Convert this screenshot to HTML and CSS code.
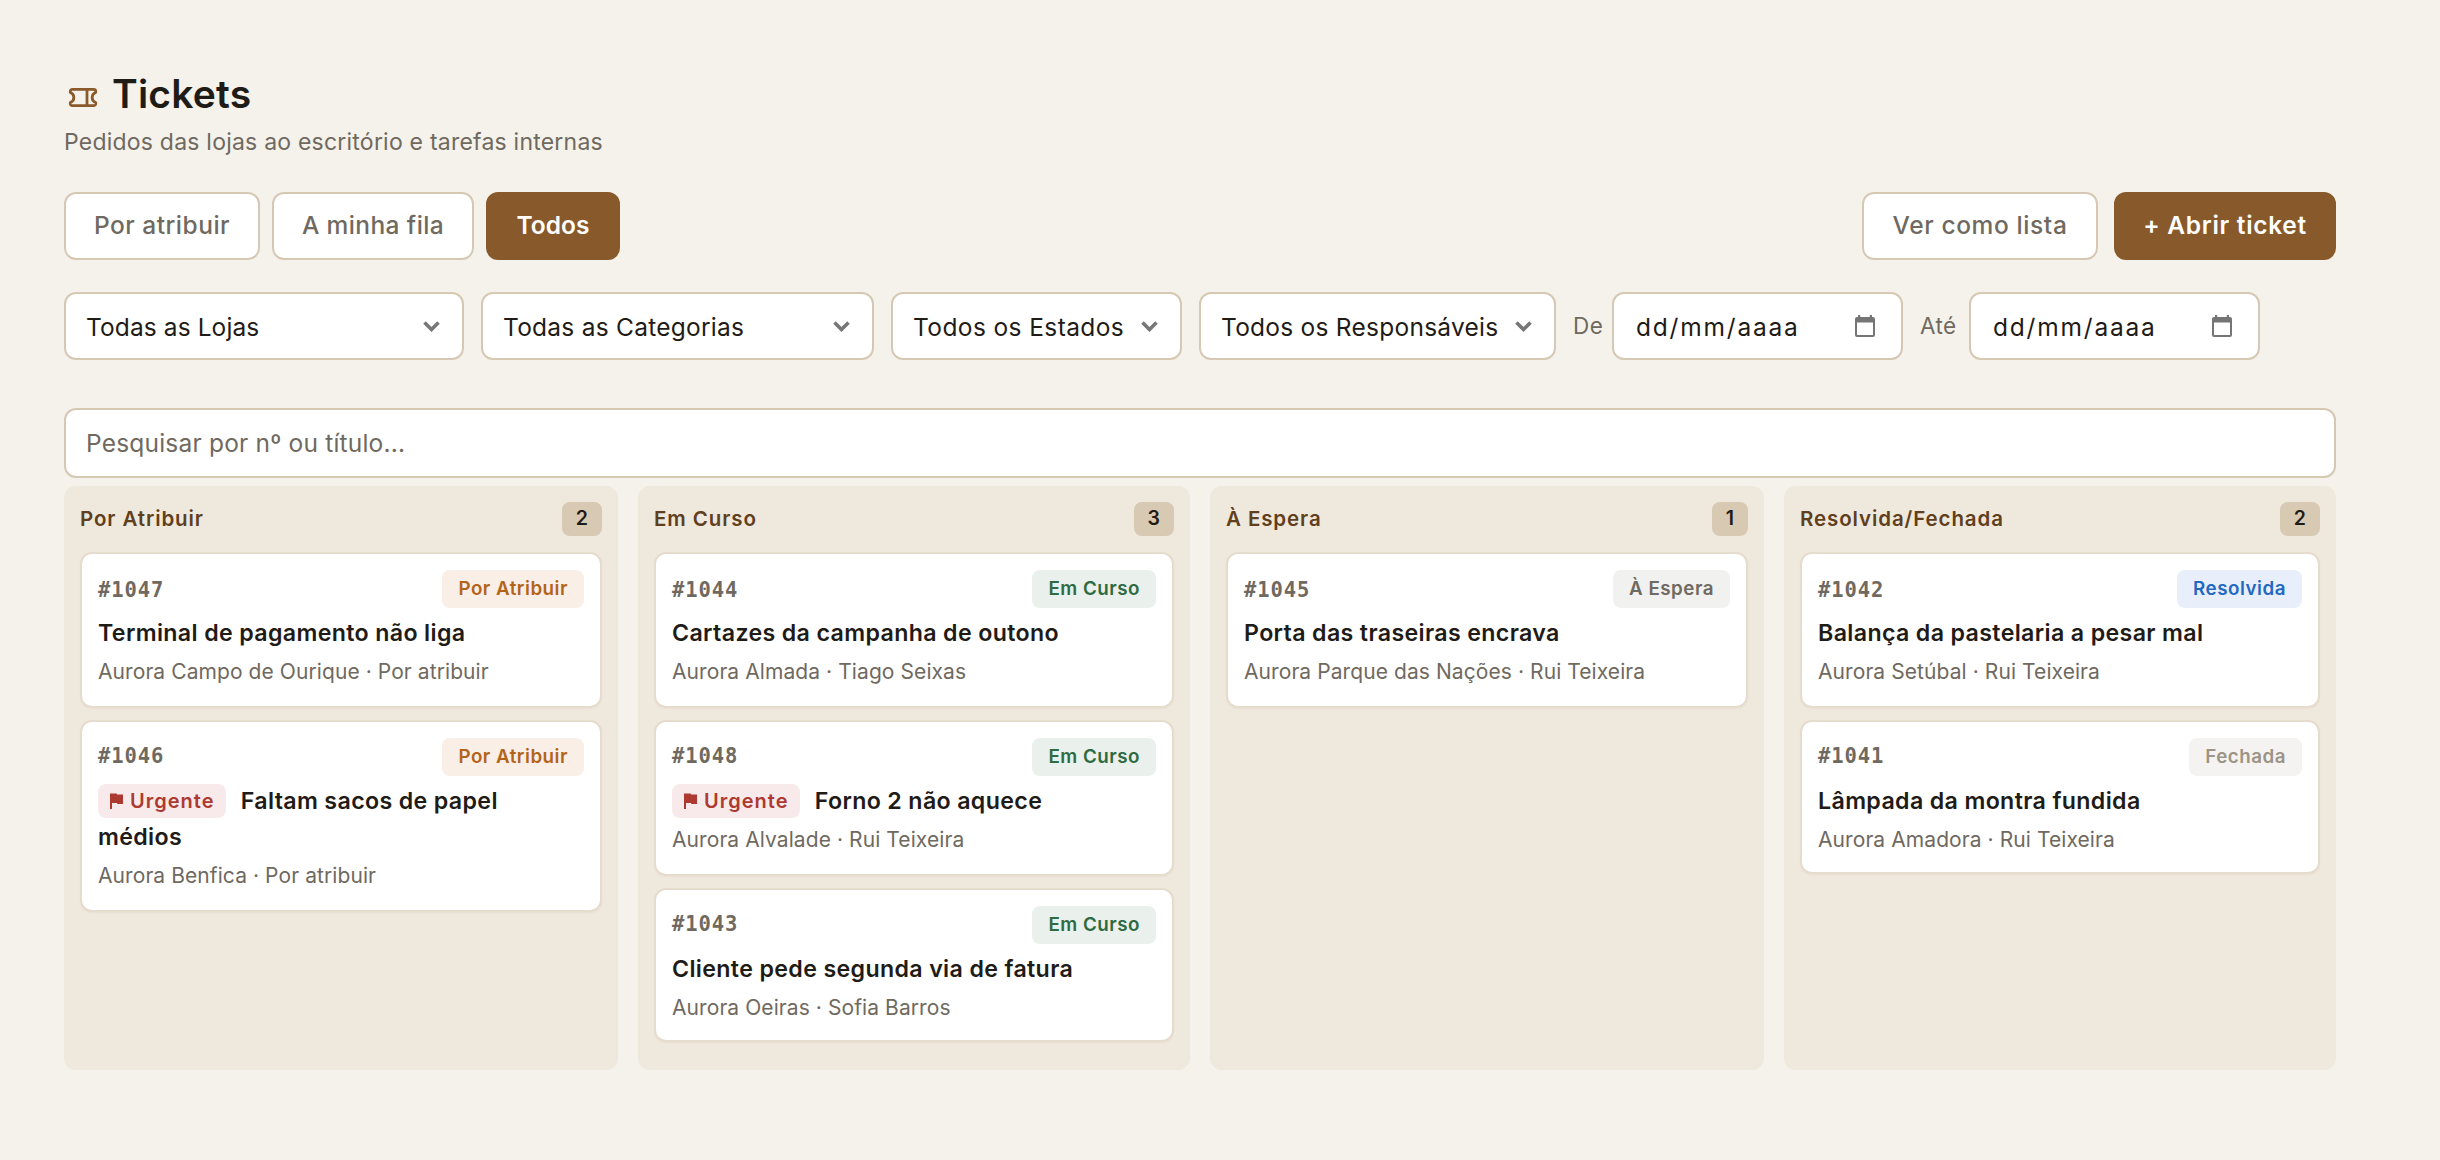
FILE: index.html
```
<!DOCTYPE html>
<html lang="pt">
<head>
    <meta charset="UTF-8">
    <title>Tickets</title>
    <link rel="stylesheet" href="styles.css">
</head>
<body>
    <svg class="sprite" aria-hidden="true">
        <symbol id="chevron" viewBox="0 0 17 11">
            <path d="M1.500 1.500l7 7 7-7" fill="none" stroke="currentColor" stroke-width="3.6"/>
        </symbol>
        <symbol id="calendar" viewBox="0 0 20 22">
            <path d="M3 0h2.2v2h9.6V0H17v2h1a2 2 0 0 1 2 2v16a2 2 0 0 1-2 2H2a2 2 0 0 1-2-2V4a2 2 0 0 1 2-2h1zM2 7.5V20h16V7.5z" fill="currentColor" fill-rule="evenodd"/>
        </symbol>
        <symbol id="flag" viewBox="0 0 13 16">
            <path d="M0 .5h6.6l.5 1H13v9.500H7.500l-.6-1H2V16H0z" fill="currentColor"/>
        </symbol>
    </svg>

    <main class="page">
        <h1 class="page-title">
            <svg class="ticket-icon" viewBox="0 0 28 19">
                <path d="M3.300 1.300h21.400a2 2 0 0 1 2 2v1.200a5.300 5.300 0 0 0 0 10v1.200a2 2 0 0 1-2 2H3.300a2 2 0 0 1-2-2v-1.200a5.300 5.300 0 0 0 0-10V3.300a2 2 0 0 1 2-2zM18 1.300v16.400"/>
            </svg>
            Tickets
        </h1>
        <p class="subtitle">Pedidos das lojas ao escritório e tarefas internas</p>

        <div class="toolbar">
            <button class="btn btn-unassigned">Por atribuir</button>
            <button class="btn btn-mine">A minha fila</button>
            <button class="btn btn-all primary">Todos</button>
            <button class="btn btn-view">Ver como lista</button>
            <button class="btn btn-new primary">+ Abrir ticket</button>
        </div>

        <div class="filters">
            <div class="field store">Todas as Lojas <svg class="chevron"><use href="#chevron"/></svg></div>
            <div class="field category">Todas as Categorias <svg class="chevron"><use href="#chevron"/></svg></div>
            <div class="field state">Todos os Estados <svg class="chevron"><use href="#chevron"/></svg></div>
            <div class="field owner">Todos os Responsáveis <svg class="chevron"><use href="#chevron"/></svg></div>
            <div class="date-group from">
                <span class="date-label">De</span>
                <div class="field date">dd/mm/aaaa <svg class="calendar"><use href="#calendar"/></svg></div>
            </div>
            <div class="date-group to">
                <span class="date-label">Até</span>
                <div class="field date">dd/mm/aaaa <svg class="calendar"><use href="#calendar"/></svg></div>
            </div>
        </div>

        <input class="search" type="text" placeholder="Pesquisar por nº ou título...">

        <div class="board">
            <section class="column">
                <header class="column-head"><h2>Por Atribuir</h2><span class="count">2</span></header>
                <article class="card">
                    <div class="card-head"><span class="ticket-id">#1047</span><span class="status unassigned">Por Atribuir</span></div>
                    <h3>Terminal de pagamento não liga</h3>
                    <p>Aurora Campo de Ourique · Por atribuir</p>
                </article>
                <article class="card">
                    <div class="card-head"><span class="ticket-id">#1046</span><span class="status unassigned">Por Atribuir</span></div>
                    <h3><span class="urgent"><svg><use href="#flag"/></svg>Urgente</span> Faltam sacos de papel médios</h3>
                    <p>Aurora Benfica · Por atribuir</p>
                </article>
            </section>

            <section class="column">
                <header class="column-head"><h2>Em Curso</h2><span class="count">3</span></header>
                <article class="card">
                    <div class="card-head"><span class="ticket-id">#1044</span><span class="status progress">Em Curso</span></div>
                    <h3>Cartazes da campanha de outono</h3>
                    <p>Aurora Almada · Tiago Seixas</p>
                </article>
                <article class="card">
                    <div class="card-head"><span class="ticket-id">#1048</span><span class="status progress">Em Curso</span></div>
                    <h3><span class="urgent"><svg><use href="#flag"/></svg>Urgente</span> Forno 2 não aquece</h3>
                    <p>Aurora Alvalade · Rui Teixeira</p>
                </article>
                <article class="card short">
                    <div class="card-head"><span class="ticket-id">#1043</span><span class="status progress">Em Curso</span></div>
                    <h3>Cliente pede segunda via de fatura</h3>
                    <p>Aurora Oeiras · Sofia Barros</p>
                </article>
            </section>

            <section class="column">
                <header class="column-head"><h2>À Espera</h2><span class="count">1</span></header>
                <article class="card">
                    <div class="card-head"><span class="ticket-id">#1045</span><span class="status waiting">À Espera</span></div>
                    <h3>Porta das traseiras encrava</h3>
                    <p>Aurora Parque das Nações · Rui Teixeira</p>
                </article>
            </section>

            <section class="column">
                <header class="column-head"><h2>Resolvida/Fechada</h2><span class="count">2</span></header>
                <article class="card">
                    <div class="card-head"><span class="ticket-id">#1042</span><span class="status resolved">Resolvida</span></div>
                    <h3>Balança da pastelaria a pesar mal</h3>
                    <p>Aurora Setúbal · Rui Teixeira</p>
                </article>
                <article class="card short">
                    <div class="card-head"><span class="ticket-id">#1041</span><span class="status closed">Fechada</span></div>
                    <h3>Lâmpada da montra fundida</h3>
                    <p>Aurora Amadora · Rui Teixeira</p>
                </article>
            </section>
        </div>
    </main>
</body>
</html>
```
FILE: styles.css
```
* {
    margin: 0;
    padding: 0;
    box-sizing: border-box;
}

body {
    background: #f5f2eb;
    color: #1f1b16;
    font-family: Inter, 'Liberation Sans', sans-serif;
}

.sprite {
    display: none;
}

.page {
    width: 2400px;
    padding: 70px 64px 90px;
}

.page-title {
    display: flex;
    align-items: center;
    gap: 15px;
    height: 48px;
    font-size: 39px;
    font-weight: 600;
    line-height: 48px;
    letter-spacing: 0.2px;
}

.ticket-icon {
    width: 28px;
    height: 19px;
    margin: 6px 0 0 5px;
    fill: none;
    stroke: #8a5a2b;
    stroke-width: 2.8;
    stroke-linejoin: round;
    overflow: visible;
}

.subtitle {
    margin: 6px 0 32px;
    color: #6f695f;
    font-size: 23px;
    line-height: 36px;
    letter-spacing: 0.22px;
}

/* buttons */
.toolbar {
    display: flex;
    gap: 12px;
    margin-bottom: 32px;
}

.btn {
    height: 68px;
    padding-bottom: 3px;
    border: 2px solid #d6c8b3;
    border-radius: 12px;
    background: #fff;
    color: #6f695f;
    font-family: inherit;
    font-size: 24.5px;
    font-weight: 450;
    letter-spacing: 0.5px;
    white-space: nowrap;
}

.btn.primary {
    border-color: #885a2b;
    background: #885a2b;
    color: #fff;
    font-weight: 600;
}

.btn-unassigned { width: 196px; }
.btn-mine { width: 202px; letter-spacing: 0.4px; }
.btn.btn-all { width: 134px; letter-spacing: 0; }

.btn-view {
    width: 236px;
    margin-left: auto;
    letter-spacing: 0.6px;
}

.btn-new {
    width: 222px;
    margin-left: 4px;
    letter-spacing: 0.7px;
}

/* filters */
.filters {
    display: flex;
    gap: 17px;
    margin-bottom: 48px;
}

.field {
    display: flex;
    align-items: center;
    justify-content: space-between;
    height: 68px;
    padding: 1px 22px 0 20px;
    border: 2px solid #d6c8b3;
    border-radius: 12px;
    background: #fff;
    font-size: 24.5px;
    letter-spacing: 0.25px;
    white-space: nowrap;
}

.store { width: 400px; letter-spacing: 0.1px; }
.category { width: 393px; }
.state { width: 291px; letter-spacing: 0.4px; }
.owner { width: 357px; }

.chevron {
    width: 17px;
    height: 11px;
    margin-bottom: 1px;
    color: #777;
}

.date-group {
    display: flex;
    align-items: center;
    justify-content: space-between;
}

.from { width: 330px; }
.to { width: 340px; }

.date-label {
    padding-bottom: 1px;
    color: #6f695f;
    font-size: 22.5px;
    letter-spacing: 0.4px;
}

.date {
    width: 291px;
    padding: 1px 26px 0 22px;
    letter-spacing: 1.8px;
}

.calendar {
    width: 20px;
    height: 22px;
    margin-bottom: 2px;
    color: #757575;
}

.search {
    display: block;
    width: 100%;
    height: 70px;
    margin-bottom: 8px;
    padding: 0 20px 1px;
    border: 2px solid #d6c8b3;
    border-radius: 12px;
    background: #fff;
    font-family: inherit;
    font-size: 24.5px;
    letter-spacing: 0.2px;
}

.search::placeholder {
    color: #6f695f;
}

/* board */
.board {
    display: grid;
    grid-template-columns: 554px 552px 554px 552px;
    gap: 20px;
}

.column {
    padding: 16px;
    border-radius: 12px;
    background: #efe8dc;
}

.column-head {
    display: flex;
    justify-content: space-between;
    margin-bottom: 16px;
}

.column-head h2 {
    color: #5f3f1c;
    font-size: 20.5px;
    font-weight: 600;
    line-height: 33px;
    letter-spacing: 0.9px;
}

.count {
    height: 34px;
    padding: 0 14px;
    border-radius: 8px;
    background: #d7c9b2;
    font-size: 19.5px;
    font-weight: 600;
    line-height: 33px;
}

.card {
    margin-bottom: 12px;
    padding: 16px 16px 18px;
    border: 2px solid #e6dccd;
    border-radius: 12px;
    background: #fff;
    box-shadow: 0 1px 2px rgba(95, 63, 28, 0.04);
}

.card.short {
    padding-bottom: 16px;
}

.card-head {
    display: flex;
    align-items: center;
    justify-content: space-between;
    height: 38px;
    margin-bottom: 7px;
}

.ticket-id {
    padding-bottom: 2px;
    color: #6f695f;
    font: bold 20.5px 'DejaVu Sans Mono', monospace;
    letter-spacing: 0.9px;
}

.column-head + .card .ticket-id {
    padding: 2px 0 0;
}

.status {
    height: 38px;
    padding: 0 16px;
    border-radius: 8px;
    font-size: 18.8px;
    font-weight: 600;
    line-height: 37px;
    letter-spacing: 0.5px;
}

.unassigned { background: #faefe7; color: #b4641a; }
.progress { background: #eaf0ec; color: #2f6b42; }
.waiting { background: #f1f1ef; color: #6f695f; }
.resolved { background: #e8effb; color: #2468c2; }
.closed { background: #f5f3f1; color: #9c9486; }

.card h3 {
    font-size: 23.2px;
    font-weight: 600;
    line-height: 36px;
    letter-spacing: 0.35px;
}

.card p {
    margin-top: 4px;
    color: #6f695f;
    font-size: 21px;
    line-height: 33px;
    letter-spacing: 0.08px;
}

.urgent {
    display: inline-flex;
    align-items: center;
    gap: 7px;
    height: 34px;
    margin-right: 8px;
    padding: 0 12px;
    border-radius: 8px;
    background: #f8eaeb;
    color: #ad3a30;
    font-size: 20px;
    font-weight: 600;
    line-height: 34px;
    letter-spacing: 1px;
}

.urgent svg {
    width: 13px;
    height: 16px;
}
```
